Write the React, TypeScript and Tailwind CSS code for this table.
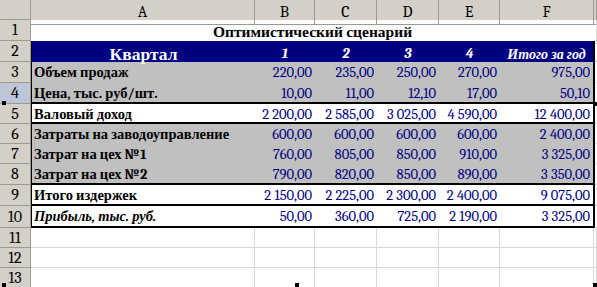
import React from "react";

const rowHeights = [21, 21, 21, 21, 20, 20, 20, 21, 21, 22, 20, 20, 20];

type DataRow = {
  n: number;
  label: string;
  values: string[];
  white?: boolean;
  italic?: boolean;
  line?: boolean;
};

const dataRows: DataRow[] = [
  { n: 3, label: "Объем продаж", values: ["220,00", "235,00", "250,00", "270,00", "975,00"] },
  { n: 4, label: "Цена, тыс. руб/шт.", values: ["10,00", "11,00", "12,10", "17,00", "50,10"], line: true },
  { n: 5, label: "Валовый доход", values: ["2 200,00", "2 585,00", "3 025,00", "4 590,00", "12 400,00"], white: true, line: true },
  { n: 6, label: "Затраты на заводоуправление", values: ["600,00", "600,00", "600,00", "600,00", "2 400,00"] },
  { n: 7, label: "Затрат на цех №1", values: ["760,00", "805,00", "850,00", "910,00", "3 325,00"] },
  { n: 8, label: "Затрат на цех №2", values: ["790,00", "820,00", "850,00", "890,00", "3 350,00"], line: true },
  { n: 9, label: "Итого издержек", values: ["2 150,00", "2 225,00", "2 300,00", "2 400,00", "9 075,00"], white: true, line: true },
  { n: 10, label: "Прибыль, тыс. руб.", values: ["50,00", "360,00", "725,00", "2 190,00", "3 325,00"], white: true, italic: true, line: true },
];

function RowHeader({ n, h }: { n: number; h: number }) {
  return (
    <div
      className={`flex items-center justify-center border-b border-r border-[#9d9a92] text-[16px] text-black ${
        n === 4 ? "bg-[#bcc6d8]" : "bg-[#d4d0c8]"
      }`}
      style={{ height: h }}
    >
      {n}
    </div>
  );
}

function EmptyRow({ h }: { h: number }) {
  return (
    <div className="grid grid-cols-[224px_60px_62px_62px_61px_94px_3px]" style={{ height: h }}>
      {Array.from({ length: 7 }).map((_, i) => (
        <div key={i} className="border-b border-r border-[#d8d8d8] bg-white" />
      ))}
    </div>
  );
}

export default function App() {
  return (
    <div className="relative h-[287px] w-[597px] overflow-hidden bg-white font-serif">
      <div className="flex">
        {/* row numbers */}
        <div className="flex w-[31px] shrink-0 flex-col">
          <div className="h-[20px] border-b border-r border-[#9d9a92] bg-[#d4d0c8]" />
          {rowHeights.map((h, i) => (
            <RowHeader key={i} n={i + 1} h={h} />
          ))}
        </div>

        <div className="flex flex-1 flex-col">
          {/* column letters */}
          <div className="grid h-[20px] shrink-0 grid-cols-[224px_60px_62px_62px_61px_94px_3px] bg-[#d4d0c8] text-[16px] text-black">
            {["A", "B", "C", "D", "E", "F", ""].map((c, i) => (
              <div key={i} className="flex items-center justify-center border-b border-r border-[#9d9a92]">
                {c}
              </div>
            ))}
          </div>

          {/* title */}
          <div className="grid h-[21px] shrink-0 grid-cols-[563px_3px]">
            <div className="flex items-center justify-center pt-px text-[15.5px] font-bold text-black">
              Оптимистический сценарий
            </div>
            <div className="border-b border-r border-[#d8d8d8]" />
          </div>

          {/* table */}
          <div className="flex shrink-0">
            <div className="w-[564px] border-l border-r-2 border-black">
              <div className="grid h-[21px] grid-cols-[223px_60px_62px_62px_61px_1fr] bg-[#000080] font-bold italic text-white">
                <div className="flex items-center justify-center text-[17.5px] not-italic">Квартал</div>
                {["1", "2", "3", "4"].map((q) => (
                  <div key={q} className="flex items-center justify-center text-[14.5px]">
                    {q}
                  </div>
                ))}
                <div className="flex items-center justify-center text-[14px]">Итого за год</div>
              </div>
              {dataRows.map((r) => (
                <div
                  key={r.n}
                  className={`grid grid-cols-[223px_60px_62px_62px_61px_1fr] text-[14.5px] ${
                    r.white ? "bg-white" : "bg-[#c0c0c0]"
                  } ${r.line ? "border-b-2 border-black" : ""}`}
                  style={{ height: rowHeights[r.n - 1] }}
                >
                  <div className={`flex items-center pl-[2px] font-bold text-black ${r.italic ? "italic" : ""}`}>
                    {r.label}
                  </div>
                  {r.values.map((v, i) => (
                    <div key={i} className="flex items-center justify-end whitespace-nowrap pr-[3px] text-[#000080]">
                      {v}
                    </div>
                  ))}
                </div>
              ))}
            </div>
            <div className="flex w-[2px] flex-col">
              {rowHeights.slice(1, 10).map((h, i) => (
                <div key={i} className="border-b border-[#d8d8d8]" style={{ height: h }} />
              ))}
            </div>
          </div>

          <EmptyRow h={20} />
          <EmptyRow h={20} />
          <EmptyRow h={20} />
        </div>
      </div>

      {/* picture handles */}
      <div className="absolute left-[2px] top-[101px] h-[4px] w-[4px] bg-black" />
      <div className="absolute right-0 top-[102px] h-[4px] w-[4px] bg-black" />
      <div className="absolute bottom-0 left-[2px] h-[4px] w-[4px] bg-black" />
      <div className="absolute bottom-0 left-[295px] h-[4px] w-[4px] bg-black" />
      <div className="absolute bottom-0 right-0 h-[4px] w-[4px] bg-black" />
    </div>
  );
}
